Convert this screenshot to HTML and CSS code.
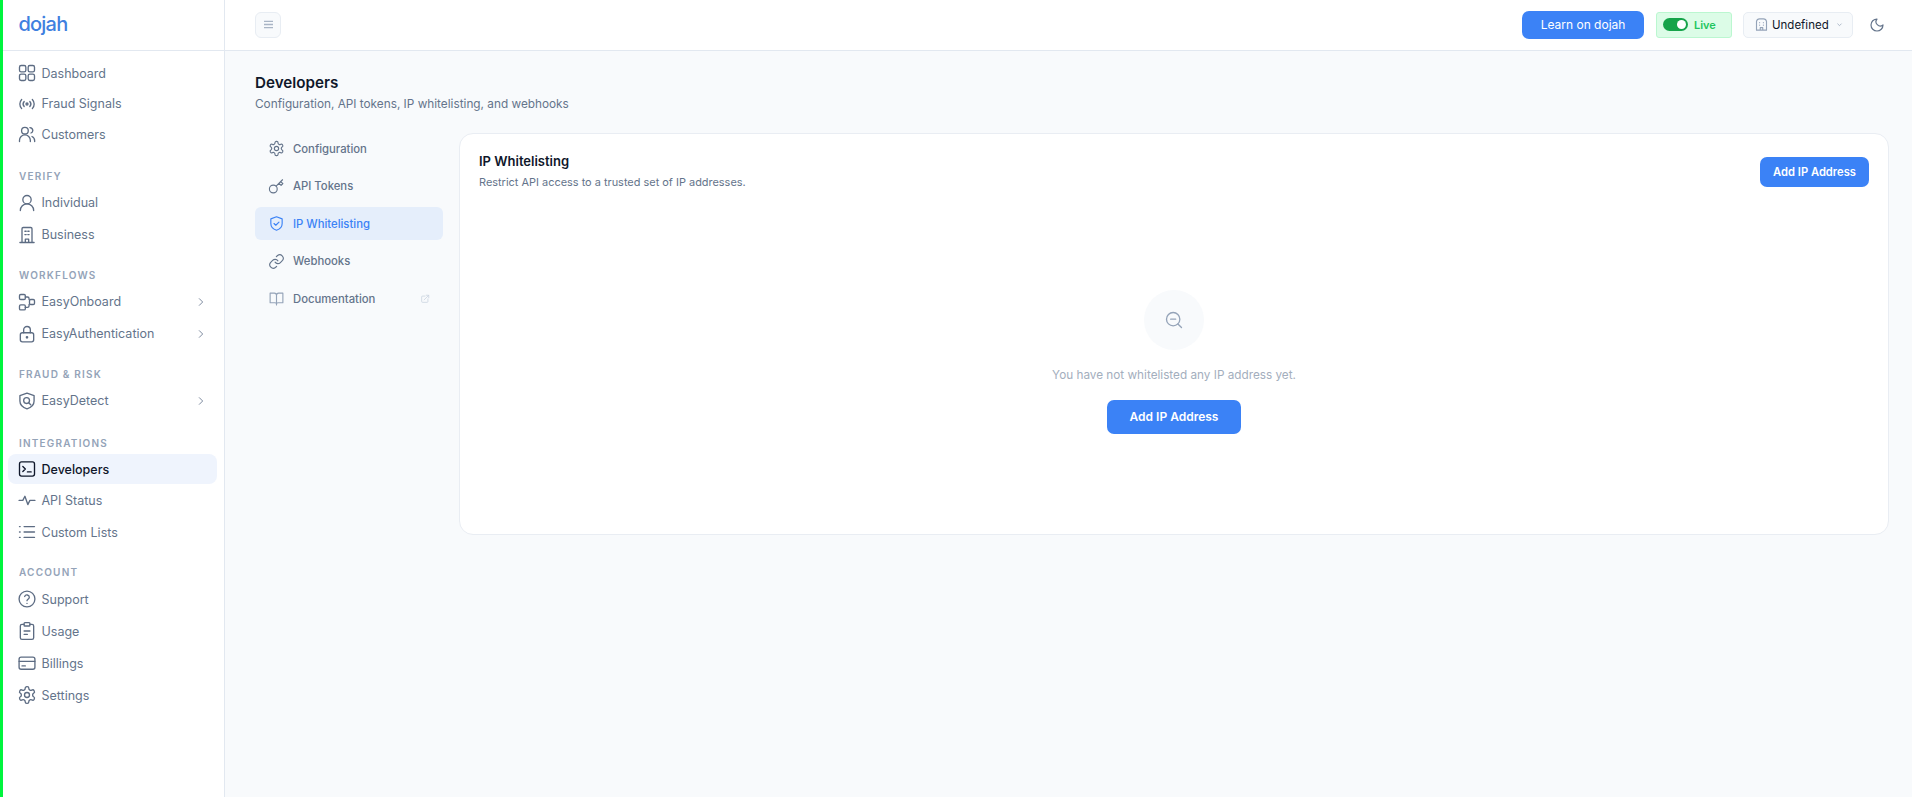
FILE: index.html
```html
<!DOCTYPE html>
<html lang="en">
<head>
<meta charset="utf-8">
<title>Developers - dojah</title>
<link rel="stylesheet" href="styles.css">
</head>
<body>
<div class="app">
  <aside class="sidebar">
    <div class="brand"><span class="logo">dojah</span></div>
    <nav class="nav">
      <div class="group first">
        <a class="item short"><svg class="ico" viewBox="0 0 24 24"><rect x="3" y="3" width="7.6" height="7.6" rx="2"/><rect x="13.4" y="3" width="7.6" height="7.6" rx="2"/><rect x="3" y="13.4" width="7.6" height="7.6" rx="2"/><rect x="13.4" y="13.4" width="7.6" height="7.6" rx="2"/></svg><span>Dashboard</span></a>
        <a class="item short"><svg class="ico" viewBox="0 0 24 24"><path d="M5.6 6.5a8 8 0 0 0 0 11M18.4 6.5a8 8 0 0 1 0 11M8.6 9a4.5 4.5 0 0 0 0 6M15.4 9a4.5 4.5 0 0 1 0 6"/><circle cx="12" cy="12" r="1.2"/></svg><span>Fraud Signals</span></a>
        <a class="item short"><svg class="ico" viewBox="0 0 24 24"><circle cx="9.5" cy="8" r="4"/><path d="M3 21v-1.5a6.5 6.5 0 0 1 13 0V21M15.5 4.4a3.8 3.8 0 0 1 3.5 3.4 3.5 3.5 0 0 1-2.2 3M18 15a5.5 5.5 0 0 1 3.2 5v1"/></svg><span>Customers</span></a>
      </div>
      <div class="group">
        <div class="label">VERIFY</div>
        <a class="item"><svg class="ico" viewBox="0 0 24 24"><circle cx="12" cy="8" r="5"/><path d="M20 21a8 8 0 0 0-16 0"/></svg><span>Individual</span></a>
        <a class="item"><svg class="ico" viewBox="0 0 24 24"><path d="M6 21V4.500A1.500 1.500 0 0 1 7.500 3h9A1.500 1.500 0 0 1 18 4.500V21M3.500 21h17M10 21v-4h4v4M9.500 7.500h1.500M13 7.500h1.500M9.500 11.500h1.500M13 11.500h1.500"/></svg><span>Business</span></a>
      </div>
      <div class="group">
        <div class="label">WORKFLOWS</div>
        <a class="item"><svg class="ico" viewBox="0 0 24 24"><rect x="3" y="3" width="7" height="6" rx="1.500"/><rect x="3" y="15.500" width="7" height="6" rx="1.500"/><rect x="15" y="9" width="6" height="6" rx="1.500"/><path d="M10 6h2.500a2 2 0 0 1 2 2v1M10 18.500h2.500a2 2 0 0 0 2-2V15"/></svg><span>EasyOnboard</span><svg class="chev" viewBox="0 0 24 24"><path d="m8 4 8 8-8 8"/></svg></a>
        <a class="item"><svg class="ico" viewBox="0 0 24 24"><rect x="4" y="10.500" width="16" height="11" rx="2.500"/><path d="M8 10.500V7a4 4 0 0 1 8 0v3.500"/><circle cx="12" cy="16" r=".8"/></svg><span>EasyAuthentication</span><svg class="chev" viewBox="0 0 24 24"><path d="m8 4 8 8-8 8"/></svg></a>
      </div>
      <div class="group">
        <div class="label">FRAUD &amp; RISK</div>
        <a class="item"><svg class="ico" viewBox="0 0 24 24"><path d="M12 2.500 20.500 5.500V12c0 5-3.800 8-8.500 9.500C7.300 20 3.500 17 3.500 12V5.500Z"/><circle cx="11.500" cy="11.500" r="3.500"/><path d="m14 14 2.500 2.500"/></svg><span>EasyDetect</span><svg class="chev" viewBox="0 0 24 24"><path d="m8 4 8 8-8 8"/></svg></a>
      </div>
      <div class="group wide">
        <div class="label">INTEGRATIONS</div>
        <a class="item active"><svg class="ico" viewBox="0 0 24 24"><rect x="3" y="3.500" width="18" height="17" rx="2.500"/><path d="m7 9 3 3-3 3M12.500 15.500H17"/></svg><span>Developers</span></a>
        <a class="item"><svg class="ico" viewBox="0 0 24 24"><path d="M2.500 12.500H7l2.500-5 3.500 10 2.500-5h6"/></svg><span>API Status</span></a>
        <a class="item"><svg class="ico" viewBox="0 0 24 24"><path d="M8.500 5.500H21M8.500 12H21M8.500 18.500H21M3 5.500h.8M3 12h.8M3 18.500h.8"/></svg><span>Custom Lists</span></a>
      </div>
      <div class="group">
        <div class="label">ACCOUNT</div>
        <a class="item"><svg class="ico" viewBox="0 0 24 24"><circle cx="12" cy="12" r="9.500"/><path d="M9.200 9a2.900 2.900 0 0 1 5.600 1c0 2-2.800 2.500-2.800 4M12 17.300h.01"/></svg><span>Support</span></a>
        <a class="item"><svg class="ico" viewBox="0 0 24 24"><rect x="8.500" y="2" width="7" height="4" rx="1"/><path d="M15.500 4H18a2 2 0 0 1 2 2v14a2 2 0 0 1-2 2H6a2 2 0 0 1-2-2V6a2 2 0 0 1 2-2h2.500M8.500 12h7M8.500 16h4"/></svg><span>Usage</span></a>
        <a class="item"><svg class="ico" viewBox="0 0 24 24"><rect x="2.500" y="5" width="19" height="14.500" rx="2.500"/><path d="M2.500 10h19M6 15.500h4"/></svg><span>Billings</span></a>
        <a class="item"><svg class="ico" viewBox="0 0 24 24"><path d="M12.200 2h-.4a2 2 0 0 0-2 2v.2a2 2 0 0 1-1 1.700l-.4.300a2 2 0 0 1-2 0l-.2-.1a2 2 0 0 0-2.700.7l-.2.400a2 2 0 0 0 .7 2.700l.2.100a2 2 0 0 1 1 1.700v.5a2 2 0 0 1-1 1.800l-.2.100a2 2 0 0 0-.7 2.700l.2.400a2 2 0 0 0 2.700.7l.2-.1a2 2 0 0 1 2 0l.4.300a2 2 0 0 1 1 1.700v.2a2 2 0 0 0 2 2h.4a2 2 0 0 0 2-2v-.2a2 2 0 0 1 1-1.700l.4-.3a2 2 0 0 1 2 0l.2.100a2 2 0 0 0 2.700-.7l.2-.4a2 2 0 0 0-.7-2.700l-.2-.1a2 2 0 0 1-1-1.800v-.5a2 2 0 0 1 1-1.700l.2-.1a2 2 0 0 0 .7-2.700l-.2-.4a2 2 0 0 0-2.700-.7l-.2.100a2 2 0 0 1-2 0l-.4-.3a2 2 0 0 1-1-1.700V4a2 2 0 0 0-2-2Z"/><circle cx="12" cy="12" r="3"/></svg><span>Settings</span></a>
      </div>
    </nav>
  </aside>
  <div class="page">
    <header class="topbar">
      <button class="menu"><svg viewBox="0 0 12 10"><path d="M1 1.500h10M1 5h10M1 8.500h10"/></svg></button>
      <div class="actions">
        <button class="btn learn">Learn on dojah</button>
        <div class="live"><span class="toggle"><i class="knob"></i></span><span>Live</span></div>
        <div class="org"><svg class="org-ico" viewBox="0 0 24 24"><path d="M4 21V7a5 5 0 0 1 5-4h6a5 5 0 0 1 5 4v14ZM10 21v-4h4v4M9 9h.01M15 9h.01M9 13h.01M15 13h.01"/></svg><span>Undefined</span><svg class="org-chev" viewBox="0 0 24 24"><path d="m5 9 7 7 7-7"/></svg></div>
        <svg class="moon" viewBox="0 0 24 24"><path d="M12 3a6.400 6.400 0 0 0 9 9 9 9 0 1 1-9-9Z"/></svg>
      </div>
    </header>
    <main class="main">
      <h1 class="title">Developers</h1>
      <p class="subtitle">Configuration, API tokens, IP whitelisting, and webhooks</p>
      <div class="content">
        <ul class="tabs">
          <li class="tab"><svg class="tab-ico" viewBox="0 0 24 24"><path d="M12.200 2h-.4a2 2 0 0 0-2 2v.2a2 2 0 0 1-1 1.700l-.4.300a2 2 0 0 1-2 0l-.2-.1a2 2 0 0 0-2.700.7l-.2.400a2 2 0 0 0 .7 2.700l.2.100a2 2 0 0 1 1 1.700v.5a2 2 0 0 1-1 1.800l-.2.100a2 2 0 0 0-.7 2.700l.2.400a2 2 0 0 0 2.700.7l.2-.1a2 2 0 0 1 2 0l.4.300a2 2 0 0 1 1 1.700v.2a2 2 0 0 0 2 2h.4a2 2 0 0 0 2-2v-.2a2 2 0 0 1 1-1.700l.4-.3a2 2 0 0 1 2 0l.2.100a2 2 0 0 0 2.700-.7l.2-.4a2 2 0 0 0-.7-2.700l-.2-.1a2 2 0 0 1-1-1.800v-.5a2 2 0 0 1 1-1.700l.2-.1a2 2 0 0 0 .7-2.700l-.2-.4a2 2 0 0 0-2.700-.7l-.2.100a2 2 0 0 1-2 0l-.4-.3a2 2 0 0 1-1-1.700V4a2 2 0 0 0-2-2Z"/><circle cx="12" cy="12" r="3"/></svg><span>Configuration</span></li>
          <li class="tab"><svg class="tab-ico" viewBox="0 0 24 24"><circle cx="7.500" cy="15.500" r="5.500"/><path d="m11.500 11.500 9-9M15.500 7.500l3 3 2.500-2.500-3-3"/></svg><span>API Tokens</span></li>
          <li class="tab on"><svg class="tab-ico" viewBox="0 0 24 24"><path d="M12 2.500 20 5.500V12c0 5-3.500 8-8 9.500C7.500 20 4 17 4 12V5.500Z"/><path d="m8.500 12 2.500 2.500 4.500-4.500"/></svg><span>IP Whitelisting</span></li>
          <li class="tab"><svg class="tab-ico" viewBox="0 0 24 24"><path d="M10 13a5 5 0 0 0 7.500.5l3-3a5 5 0 0 0-7-7l-1.700 1.700"/><path d="M14 11a5 5 0 0 0-7.500-.5l-3 3a5 5 0 0 0 7 7l1.700-1.700"/></svg><span>Webhooks</span></li>
          <li class="tab"><svg class="tab-ico light" viewBox="0 0 24 24"><path d="M12 7v14M3 4.500h6a3 3 0 0 1 3 3 3 3 0 0 1 3-3h6V18h-7a2 2 0 0 0-2 2 2 2 0 0 0-2-2H3Z"/></svg><span class="grow">Documentation</span><svg class="ext" viewBox="0 0 24 24"><path d="M12 5H6a2 2 0 0 0-2 2v11a2 2 0 0 0 2 2h11a2 2 0 0 0 2-2v-6M15 3h6v6M10 14 21 3"/></svg></li>
        </ul>
        <section class="card">
          <div class="card-head">
            <div>
              <h2 class="card-title">IP Whitelisting</h2>
              <p class="card-sub">Restrict API access to a trusted set of IP addresses.</p>
            </div>
            <button class="btn add-small">Add IP Address</button>
          </div>
          <div class="empty">
            <div class="circle"><svg viewBox="0 0 24 24"><circle cx="11" cy="11" r="8"/><path d="m21 21-4.300-4.300M8 11h6"/></svg></div>
            <p class="empty-text">You have not whitelisted any IP address yet.</p>
            <button class="btn add-big">Add IP Address</button>
          </div>
        </section>
      </div>
    </main>
  </div>
</div>
</body>
</html>
```
FILE: styles.css
```css
* { box-sizing: border-box; }
html, body { margin: 0; height: 100%; }
body { font-family: Inter, "Noto Sans", "Liberation Sans", sans-serif; background: #f8fafc; color: #64748b; overflow: hidden; }
.app { display: flex; height: 797px; }
.sidebar { width: 225px; flex: none; background: #fff; border-left: 3px solid #00f53d; border-right: 1px solid #e2e8f0; }
.brand { height: 51px; border-bottom: 1px solid #e2e8f0; padding: 9px 0 0 15.500px; }
.logo { font-size: 20px; font-weight: 500; line-height: 30px; color: #3f80e0; display: block; letter-spacing: -.8px; }
.nav { padding: 7px 7px 0 5px; }
.group { margin-top: 16px; }
.group.wide { margin-top: 18.500px; }
.group.first { margin-top: 0; margin-bottom: 18px; }
.group.first + .group { margin-top: 0; }
.label { height: 16px; line-height: 16px; padding-left: 11px; margin-bottom: 3px; font-size: 10px; font-weight: 600; letter-spacing: 1.200px; color: #94a3b8; }
.item { display: flex; align-items: center; height: 32px; padding-left: 8.500px; font-size: 12.500px; color: #64748b; border-radius: 8px; }
.item.short { height: 30.500px; }
.item span { flex: 1; margin-left: 5px; }
.ico { width: 20px; height: 20px; flex: none; fill: none; stroke: #5d6c83; stroke-width: 1.600; stroke-linecap: round; stroke-linejoin: round; }
.chev { width: 10px; height: 10px; margin-right: 11px; fill: none; stroke: #64748b; stroke-width: 2; stroke-linecap: round; stroke-linejoin: round; }
.item.active { background: #eff4fd; color: #0f172a; font-weight: 500; height: 30px; margin: 2px 0 0; }
.item.active .ico { stroke: #0f172a; }
.page { flex: 1; min-width: 0; display: flex; flex-direction: column; }
.topbar { height: 51px; flex: none; background: #fff; border-bottom: 1px solid #e2e8f0; display: flex; align-items: center; justify-content: space-between; padding: 0 27px 1px 30px; }
.menu { width: 26px; height: 26px; padding: 0; display: flex; align-items: center; justify-content: center; background: #f8fafc; border: 1px solid #e8edf3; border-radius: 6px; }
.menu svg { width: 11px; height: 9px; fill: none; stroke: #a9b5c5; stroke-width: 1.500; }
.actions { display: flex; align-items: center; }
.btn { border: 0; background: #3b82f6; color: #fff; font-family: inherit; padding: 0; border-radius: 7px; }
.learn { width: 122px; height: 28px; font-size: 12px; font-weight: 400; margin-right: 12px; }
.live { width: 76px; height: 26px; display: flex; align-items: center; padding-left: 6px; background: #dcfce7; border: 1px solid #bbf7d0; border-radius: 3px; color: #22c55e; font-size: 11px; font-weight: 600; margin-right: 11px; }
.toggle { width: 25px; height: 13px; border-radius: 7px; background: #16a34a; display: flex; justify-content: flex-end; align-items: center; padding-right: 2px; margin-right: 6px; }
.knob { width: 9px; height: 9px; border-radius: 50%; background: #fff; }
.org { width: 110px; height: 26px; display: flex; align-items: center; padding-left: 10px; background: #f8fafc; border: 1px solid #e8edf3; border-radius: 5px; color: #0f172a; font-size: 11.500px; margin-right: 16px; }
.org-ico { width: 15px; height: 15px; margin-right: 3px; fill: none; stroke: #94a3b8; stroke-width: 1.800; stroke-linejoin: round; stroke-linecap: round; }
.org-chev { width: 7px; height: 7px; margin-left: 7px; fill: none; stroke: #94a3b8; stroke-width: 2.500; }
.moon { width: 16px; height: 16px; fill: none; stroke: #64748b; stroke-width: 1.800; stroke-linejoin: round; }
.main { flex: 1; padding: 22px 23px 0 30px; }
.title { margin: 0; font-size: 15.200px; line-height: 20px; font-weight: 600; color: #0f172a; }
.subtitle { margin: 1px 0 0; font-size: 11.800px; line-height: 20px; color: #64748b; }
.content { display: flex; align-items: flex-start; gap: 16px; margin-top: 18px; }
.tabs { list-style: none; margin: 0; padding: 0; width: 188px; flex: none; display: flex; flex-direction: column; gap: 4.500px; }
.tab { height: 33px; display: flex; align-items: center; padding: 0 13px; font-size: 11.300px; font-weight: 500; color: #64748b; border-radius: 6px; }
.tab.on { background: #e5eefb; color: #3b82f6; }
.tab-ico { width: 17px; height: 17px; flex: none; margin-right: 8px; fill: none; stroke: #64748b; stroke-width: 1.600; stroke-linecap: round; stroke-linejoin: round; }
.tab-ico.light { stroke: #94a3b8; }
.on .tab-ico { stroke: #3b82f6; }
.grow { flex: 1; }
.ext { width: 10px; height: 10px; fill: none; stroke: #cbd5e1; stroke-width: 2; stroke-linecap: round; stroke-linejoin: round; }
.card { flex: 1; height: 402px; margin-top: 1px; background: #fff; border: 1px solid #e9edf3; border-radius: 14px; padding: 18px 19px 0; }
.card-head { display: flex; justify-content: space-between; align-items: flex-start; }
.card-title { margin: 0; font-size: 13px; line-height: 18px; font-weight: 600; color: #0f172a; }
.card-sub { margin: 4px 0 0; font-size: 10.950px; line-height: 16px; color: #64748b; }
.add-small { width: 109px; height: 30px; font-size: 11.200px; font-weight: 600; margin-top: 5px; }
.empty { display: flex; flex-direction: column; align-items: center; margin-top: 100px; }
.circle { width: 60px; height: 60px; border-radius: 50%; background: #f8fafc; display: flex; align-items: center; justify-content: center; }
.circle svg { width: 20px; height: 20px; fill: none; stroke: #94a3b8; stroke-width: 1.600; stroke-linecap: round; }
.empty-text { margin: 14.500px 0 0; font-size: 11.750px; line-height: 20px; color: #a3aebd; }
.add-big { width: 134px; height: 34px; margin-top: 15px; font-size: 12px; font-weight: 600; }
```
